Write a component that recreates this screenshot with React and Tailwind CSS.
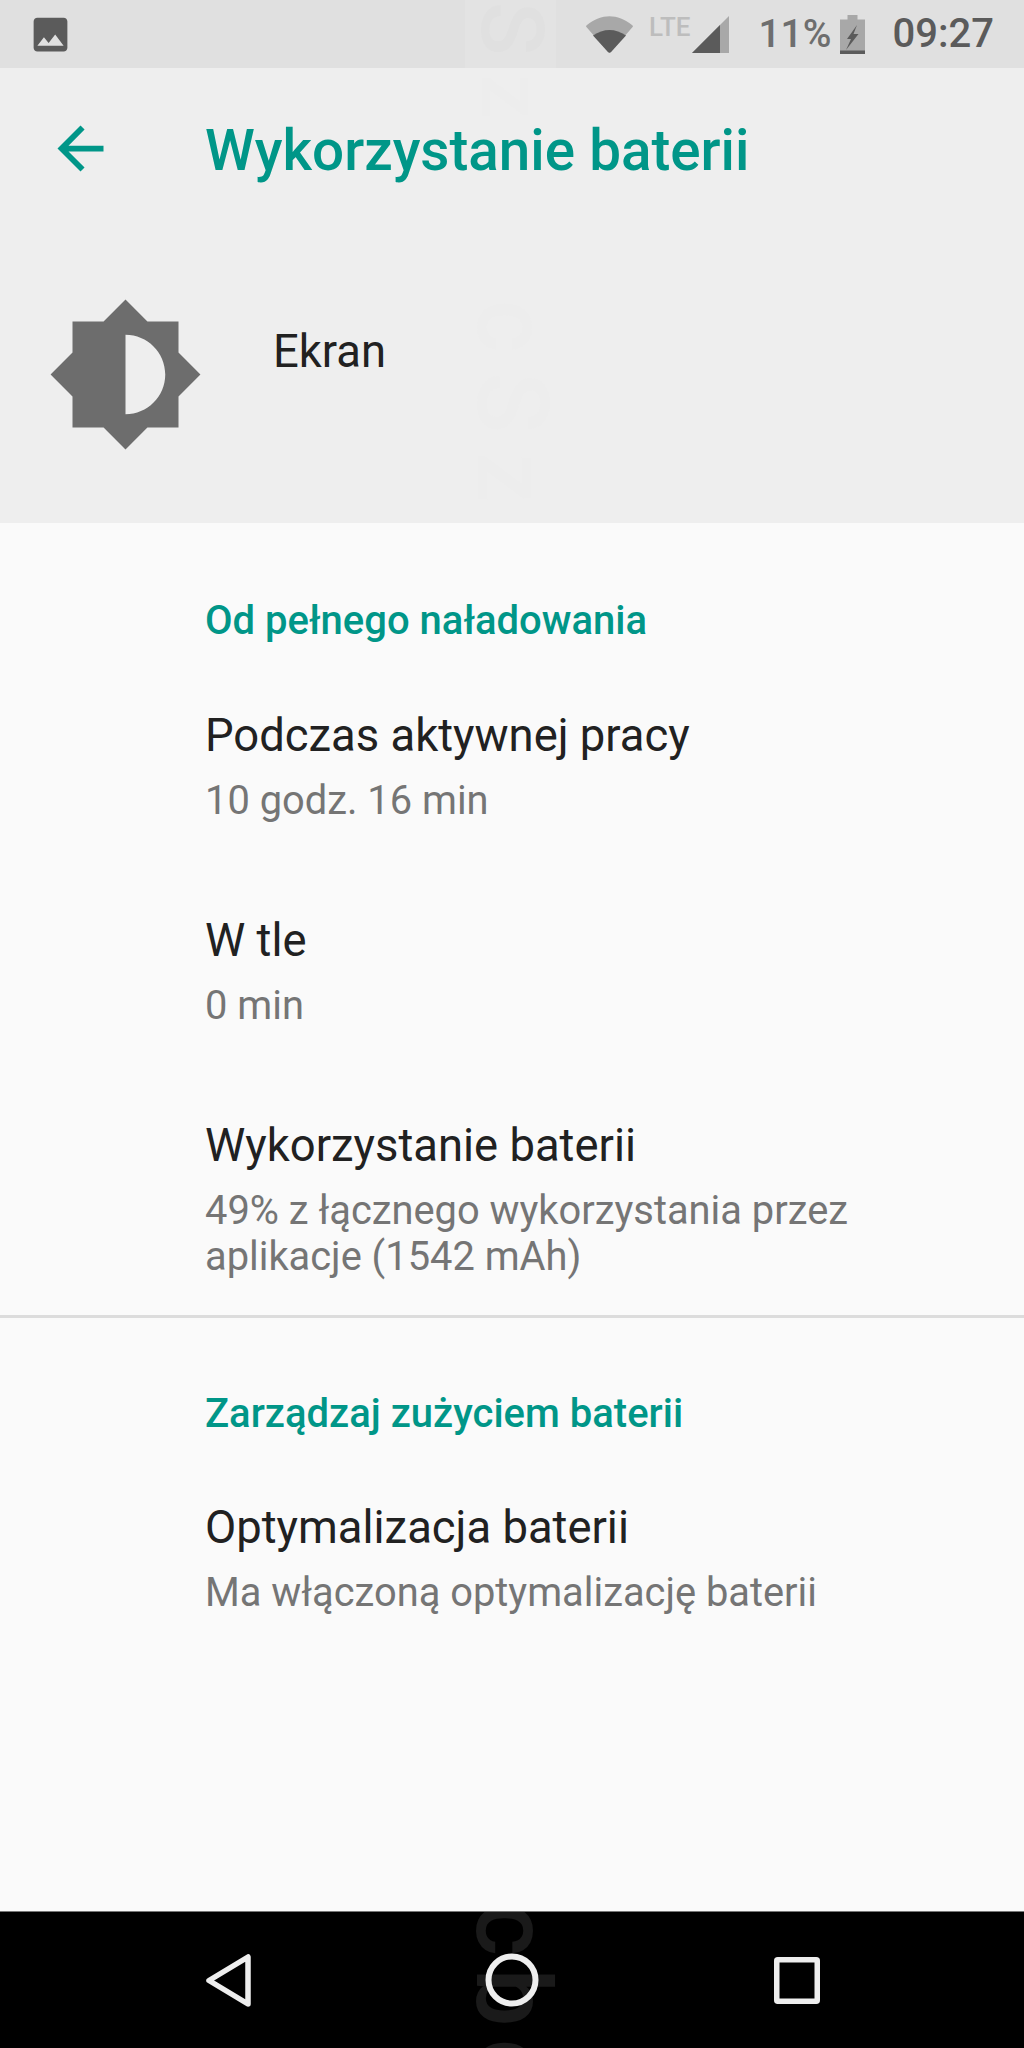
const font = { fontFamily: 'Roboto, sans-serif' };

function Row({ title, sub, className = '' }) {
  return (
    <div className={className}>
      <div className="text-[45.400px] leading-[56px] text-[#212121]">{title}</div>
      <div className="mt-[14px] text-[39.850px] leading-[46px] text-[#757575]">{sub}</div>
    </div>
  );
}

function Mark({ children, className = '' }) {
  return (
    <div className={'absolute left-[452px] font-medium leading-[120px] whitespace-nowrap [writing-mode:vertical-rl] ' + className}>
      {children}
    </div>
  );
}

export default function App() {
  return (
    <div style={font} className="flex h-[2048px] w-[1024px] flex-col overflow-hidden bg-[#fafafa]">
      {/* status bar */}
      <div className="relative flex h-[68px] shrink-0 items-center overflow-hidden bg-[#e0e0e0] pl-[28px] pr-[30px]">
        <div className="absolute left-[465px] top-0 h-full w-[91px] bg-[#e3e3e3]" />
        <Mark className="top-[2px] text-[88px] text-[#e0e0e0]">S</Mark>
        <svg className="relative" width="45" height="45" viewBox="0 0 24 24" fill="#5b5b5b">
          <path d="M21 19V5c0-1.1-.9-2-2-2H5c-1.1 0-2 .9-2 2v14c0 1.1.9 2 2 2h14c1.1 0 2-.9 2-2zM8.5 13.5l2.5 3.01L14.5 12l4.5 6H5l3.5-4.5z" />
        </svg>
        <div className="relative ml-auto flex items-center">
          <svg className="mt-[1px]" width="47" height="37" viewBox="0 0 47 37">
            <path d="M0 10.5Q0 9.5 1 9C8 3 16 .2 23.5 .2S39 3 46 9Q47 9.5 47 10.5L25 36Q23.5 37.5 22 36Z" fill="#a8a8a8" />
            <path d="M7 19.5C12 16 18 14 23.5 14S35 16 40 19.5L25 36Q23.5 37.5 22 36Z" fill="#5b5b5b" />
          </svg>
          <span className="mb-[14px] ml-[16px] text-[26px] font-medium leading-[24px] text-[#bdbdbd]">LTE</span>
          <svg className="ml-[2px] mt-[1px]" width="37" height="37" viewBox="0 0 37 37">
            <path d="M0 37L37 0V37Z" fill="#a8a8a8" />
            <path d="M0 37L28 9V37Z" fill="#5b5b5b" />
          </svg>
          <span className="ml-[29px] text-[39px] font-medium leading-[48px] text-[#6e6e6e]">11%</span>
          <svg className="ml-[8px]" width="25" height="39" viewBox="0 0 25 39">
            <path d="M7.500 0H17.500V4.500H25V39H0V4.500H7.500Z" fill="#a8a8a8" />
            <path d="M0 35.500H25V39H0Z" fill="#5b5b5b" />
            <path d="M17 10L7 24H11L6 35L18.500 19H13.500Z" fill="#5b5b5b" />
          </svg>
          <span className="ml-[28px] text-[40px] font-medium leading-[48px] text-[#5b5b5b]">09:27</span>
        </div>
      </div>

      {/* header */}
      <div className="relative h-[455px] shrink-0 overflow-hidden bg-[#eeeeee]">
        <Mark className="top-[6px] text-[88px] text-[#ededed]">z</Mark>
        <Mark className="top-[232px] text-[100px] tracking-[20px] text-[#ededed]">cSz</Mark>
        <div className="relative flex h-[160px] items-center pl-[46px]">
          <svg width="69" height="69" viewBox="0 0 24 24" fill="#009688">
            <path d="M20 11H7.830l5.590-5.590L12 4l-8 8 8 8 1.410-1.410L7.830 13H20v-2z" />
          </svg>
          <span className="ml-[90px] mt-[5px] text-[56.600px] font-medium leading-[64px] text-[#009688]">Wykorzystanie baterii</span>
        </div>
        <div className="relative flex items-start pl-[46px]">
          <svg className="mt-[67px]" width="159" height="159" viewBox="0 0 24 24" fill="#6d6d6d">
            <path d="M20 15.310L23.310 12 20 8.690V4h-4.690L12 .69 8.690 4H4v4.690L.69 12 4 15.310V20h4.690L12 23.310 15.310 20H20v-4.690zM12 18V6c3.310 0 6 2.690 6 6s-2.690 6-6 6z" />
          </svg>
          <span className="ml-[68px] mt-[96px] text-[45.400px] leading-[56px] text-[#212121]">Ekran</span>
        </div>
      </div>

      {/* body */}
      <div className="min-h-0 flex-1">
        <div className="border-b-[3px] border-[#dcdcdc] pb-[35px] pl-[205px] pr-[42px] pt-[73px]">
          <div className="text-[40px] font-medium leading-[50px] text-[#009688]">Od pełnego naładowania</div>
          <Row className="mt-[62px]" title="Podczas aktywnej pracy" sub="10 godz. 16 min" />
          <Row className="mt-[89px]" title="W tle" sub="0 min" />
          <Row className="mt-[89px]" title="Wykorzystanie baterii" sub="49% z łącznego wykorzystania przez aplikacje (1542 mAh)" />
        </div>
        <div className="pl-[205px] pr-[42px] pt-[71px]">
          <div className="text-[40px] font-medium leading-[50px] text-[#009688]">Zarządzaj zużyciem baterii</div>
          <Row className="mt-[61px]" title="Optymalizacja baterii" sub="Ma włączoną optymalizację baterii" />
        </div>
      </div>

      {/* nav */}
      <div className="relative flex h-[137px] shrink-0 items-center overflow-hidden border-t border-[#777777] bg-black pl-[206px]">
        <Mark className="top-[-10px] text-[104px] tracking-[12px] text-[#1a1a1a]">cbc</Mark>
        <svg className="relative" width="45" height="53" viewBox="0 0 45 53" fill="none" stroke="#eeeeee" strokeWidth="5.500" strokeLinejoin="round">
          <path d="M42 3V50L3 26.500Z" />
        </svg>
        <svg className="relative ml-[234px]" width="54" height="54" viewBox="0 0 54 54" fill="none" stroke="#eeeeee" strokeWidth="6">
          <circle cx="27" cy="27" r="23.500" />
        </svg>
        <svg className="relative ml-[235px]" width="46" height="47" viewBox="0 0 46 47" fill="none" stroke="#eeeeee" strokeWidth="5.500" strokeLinejoin="round">
          <rect x="2.750" y="2.750" width="40.500" height="41.500" rx="1" />
        </svg>
      </div>
    </div>
  );
}
